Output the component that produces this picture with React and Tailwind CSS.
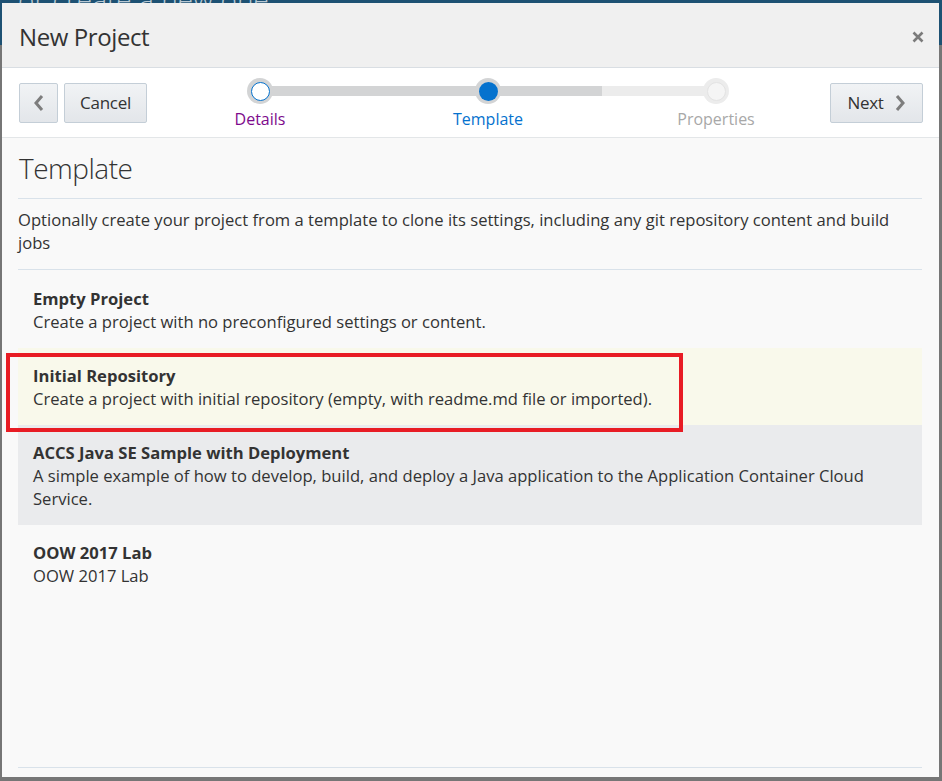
import React from "react";

function Step({ state, label }) {
  const labelColor =
    state === "visited" ? "text-[#7d0a8c]" : state === "current" ? "text-[#0572ce]" : "text-[#a8a8a8]";
  return (
    <div className="flex w-[26px] flex-col items-center">
      <div
        className={
          "flex h-[26px] w-[26px] items-center justify-center rounded-full " +
          (state === "disabled" ? "bg-[#ececec]" : "bg-[#d3d4d5]")
        }
      >
        {state === "visited" && (
          <div className="h-[19px] w-[19px] rounded-full border-[1.5px] border-[#0572ce] bg-white" />
        )}
        {state === "current" && <div className="h-[19px] w-[19px] rounded-full bg-[#0572ce]" />}
        {state === "disabled" && (
          <div className="h-[19px] w-[19px] rounded-full border border-[#e3e3e3] bg-[#f5f5f5]" />
        )}
      </div>
      <div className={"mt-[5px] whitespace-nowrap text-[16px] leading-[20px] " + labelColor}>{label}</div>
    </div>
  );
}

function Item({ title, desc, bg }) {
  return (
    <div className={"px-[15px] pb-[15px] pt-[16px] text-[16.6px] leading-[23px] " + bg}>
      <div className="font-bold text-[#333]">{title}</div>
      <div className="text-[#333]">{desc}</div>
    </div>
  );
}

export default function App() {
  return (
    <div
      className="relative h-[781px] w-[942px] overflow-hidden bg-[#767676]"
      style={{ fontFamily: "'Open Sans', 'Noto Sans', sans-serif" }}
    >
      <div className="absolute left-0 top-0 h-[45px] w-full bg-[#1d5173]">
        <div className="absolute left-[18px] top-[-22px] whitespace-nowrap text-[28px] font-light text-[#b9c9d4]">
          or create a new one
        </div>
      </div>

      <div className="absolute left-[2px] top-[3px] flex h-[774px] w-[937px] flex-col bg-[#f9f9f9]">
        {/* Header */}
        <div className="flex h-[65px] items-center justify-between border-b border-[#d9dee3] bg-[#f0f0f0] pl-[17px] pr-[15px]">
          <div className="pt-[4px] text-[24px] tracking-[-0.4px] text-[#333]">New Project</div>
          <svg width="12" height="12" viewBox="0 0 12 12" className="mt-[4px]">
            <path d="M1.5 1.5 L10.5 10.5 M10.5 1.5 L1.5 10.5" stroke="#7b7b7b" strokeWidth="2.6" strokeLinecap="butt" />
          </svg>
        </div>

        {/* Toolbar / train */}
        <div className="flex h-[70px] items-start border-b border-[#e3e6e8] bg-white pl-[17px] pr-[16px] pt-[15px]">
          <div className="flex gap-[6px]">
            <button className="flex h-[40px] w-[39px] items-center justify-center rounded-[2px] border border-[#c4ced7] bg-gradient-to-b from-[#f1f3f5] to-[#e3e6ea]">
              <svg width="12" height="18" viewBox="0 0 12 18">
                <path d="M9 2 L3 9 L9 16" stroke="#7d7d7d" strokeWidth="3" fill="none" />
              </svg>
            </button>
            <button className="flex h-[40px] w-[83px] items-center justify-center rounded-[2px] border border-[#c4ced7] bg-gradient-to-b from-[#f1f3f5] to-[#e3e6ea] text-[17px] tracking-[-0.3px] text-[#333]">
              Cancel
            </button>
          </div>

          <div className="relative ml-[100px] mt-[-5px] flex w-[482px] justify-between">
            <div className="absolute left-[13px] top-[8px] h-[10px] w-[342px] bg-[#d3d4d5]" />
            <div className="absolute left-[355px] top-[8px] h-[10px] w-[114px] bg-[#ececec]" />
            <div className="relative">
              <Step state="visited" label="Details" />
            </div>
            <div className="relative">
              <Step state="current" label="Template" />
            </div>
            <div className="relative">
              <Step state="disabled" label="Properties" />
            </div>
          </div>

          <div className="ml-auto">
            <button className="flex h-[40px] w-[93px] items-center justify-center gap-[10px] rounded-[2px] border border-[#c4ced7] bg-gradient-to-b from-[#f1f3f5] to-[#e3e6ea] text-[17px] tracking-[-0.3px] text-[#333]">
              Next
              <svg width="12" height="18" viewBox="0 0 12 18">
                <path d="M3 2 L9 9 L3 16" stroke="#7d7d7d" strokeWidth="3" fill="none" />
              </svg>
            </button>
          </div>
        </div>

        {/* Content */}
        <div className="flex flex-1 flex-col pl-[16px] pr-[17px]">
          <div className="border-b border-[#d9e2ea] pb-[10px] pl-[1px] pt-[10px] text-[28px] font-light leading-[40px] tracking-[-0.5px] text-[#333]">
            Template
          </div>
          <div className="border-b border-[#d9e2ea] pb-[15px] pt-[9px] text-[16.6px] leading-[23px] text-[#333]">
            Optionally create your project from a template to clone its settings, including any git repository content and build jobs
          </div>
          <div className="pt-[1px]" />
          <Item title="Empty Project" desc="Create a project with no preconfigured settings or content." bg="" />
          <Item
            title="Initial Repository"
            desc="Create a project with initial repository (empty, with readme.md file or imported)."
            bg="bg-[#f9f9eb]"
          />
          <Item
            title="ACCS Java SE Sample with Deployment"
            desc="A simple example of how to develop, build, and deploy a Java application to the Application Container Cloud Service."
            bg="bg-[#eaebed]"
          />
          <Item title="OOW 2017 Lab" desc="OOW 2017 Lab" bg="" />
          <div className="flex-1" />
          <div className="mb-[9px] border-b border-[#d9e2ea]" />
        </div>
      </div>

      {/* annotation */}
      <div className="absolute left-[6px] top-[353px] h-[79px] w-[677px] border-[4px] border-[#e81c24]" />
    </div>
  );
}
